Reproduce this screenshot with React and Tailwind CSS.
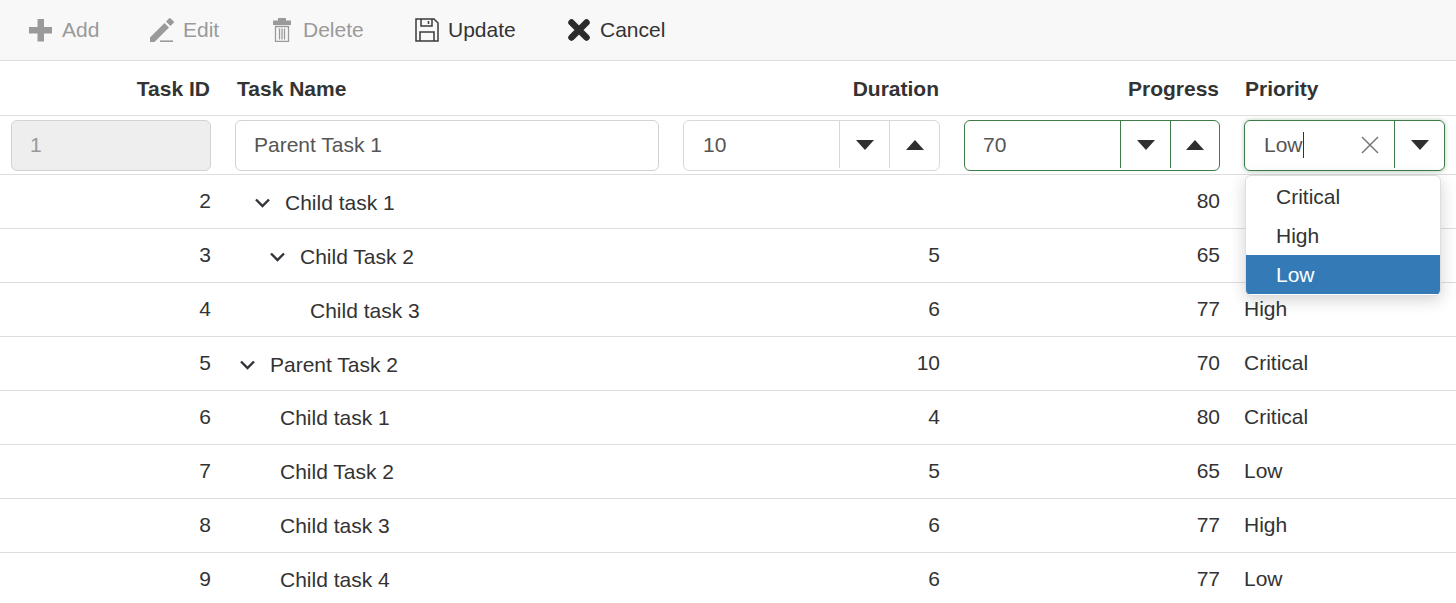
const cols = "grid grid-cols-[224px_447px_281px_280px_224px]";

const rows = [
  { id: 2, name: "Child task 1", pad: "pl-[31px] pt-[2px]", chev: true, dur: "", prog: "80", pri: "" },
  { id: 3, name: "Child Task 2", pad: "pl-[46px] pt-[2px]", chev: true, dur: "5", prog: "65", pri: "" },
  { id: 4, name: "Child task 3", pad: "pl-[86px] pt-[2px]", chev: false, dur: "6", prog: "77", pri: "High" },
  { id: 5, name: "Parent Task 2", pad: "pl-[16px] pt-[2px]", chev: true, dur: "10", prog: "70", pri: "Critical" },
  { id: 6, name: "Child task 1", pad: "pl-[56px]", chev: false, dur: "4", prog: "80", pri: "Critical" },
  { id: 7, name: "Child Task 2", pad: "pl-[56px]", chev: false, dur: "5", prog: "65", pri: "Low" },
  { id: 8, name: "Child task 3", pad: "pl-[56px]", chev: false, dur: "6", prog: "77", pri: "High" },
  { id: 9, name: "Child task 4", pad: "pl-[56px]", chev: false, dur: "6", prog: "77", pri: "Low" },
];

function Down() {
  return (
    <svg width="18" height="10" viewBox="0 0 18 10"><path d="M0 0h18L9 10z" fill="#2f2f2f" /></svg>
  );
}
function Up() {
  return (
    <svg width="18" height="10" viewBox="0 0 18 10"><path d="M0 10h18L9 0z" fill="#2f2f2f" /></svg>
  );
}
function Chevron() {
  return (
    <svg width="30" height="12" viewBox="0 0 30 12" className="shrink-0">
      <path d="M1 2.500l6.500 6.500 6.500-6.500" fill="none" stroke="#33333a" strokeWidth="2.400" />
    </svg>
  );
}

function Tool({ icon, label, disabled, width }) {
  return (
    <div className={`flex items-center ${width} ${disabled ? "text-[#9a9a9a]" : "text-[#333333]"}`}>
      {icon}
      <span>{label}</span>
    </div>
  );
}

function Spinner({ border, last }) {
  return (
    <>
      <div className={`w-[50px] h-[47px] flex items-center justify-center border-l ${border}`}><Down /></div>
      <div className={`${last} h-[47px] flex items-center justify-center border-l ${border}`}><Up /></div>
    </>
  );
}

export default function App() {
  return (
    <div className="relative w-[1456px] h-[603px] overflow-hidden bg-white text-[21px] leading-[28px] text-[#333333] font-['Liberation_Sans',Arial,sans-serif]">
      <div className="h-[61px] bg-[#f8f8f8] border-b border-[#dedede] flex items-center pl-[28px] pb-[1px]">
        <Tool
          disabled
          label="Add"
          width="w-[122px]"
          icon={
            <svg width="24" height="24" viewBox="0 0 24 24" className="mr-[10px]"><path d="M9.500 1h6.500v8h8v6.500h-8v8H9.500v-8H1V9h8.500z" fill="#9a9a9a" /></svg>
          }
        />
        <Tool
          disabled
          label="Edit"
          width="w-[123px]"
          icon={
            <svg width="25" height="24" viewBox="0 0 25 24" className="mr-[8px]">
              <path d="M0 19.500L14.500 5l4.500 4.500L4.500 24H0zM16 3.500L19 .5a1.200 1.200 0 0 1 1.700 0l2.800 2.800a1.200 1.200 0 0 1 0 1.700l-3 3z" fill="#9a9a9a" />
              <path d="M10 23.200h13" stroke="#9a9a9a" strokeWidth="1.600" />
            </svg>
          }
        />
        <Tool
          disabled
          label="Delete"
          width="w-[142px]"
          icon={
            <svg width="18" height="24" viewBox="0 0 18 24" className="mr-[12px]">
              <path d="M5 0h8v2.500h5V7H0V2.500h5z" fill="#9a9a9a" />
              <path d="M2.500 8.500h13V23.300h-13zM6.500 10.500v11M9 10.500v11M11.500 10.500v11" fill="none" stroke="#9a9a9a" strokeWidth="1.300" />
            </svg>
          }
        />
        <Tool
          label="Update"
          width="w-[152px]"
          icon={
            <svg width="24" height="24" viewBox="0 0 24 24" className="mr-[9px]">
              <path d="M1 1h18l4 4v18H1zM6 1v7h11V1M5 23v-9h14v9M13.500 3v3" fill="none" stroke="#3a3a3a" strokeWidth="1.500" />
            </svg>
          }
        />
        <Tool
          label="Cancel"
          width="w-[110px]"
          icon={
            <svg width="24" height="24" viewBox="0 0 24 24" className="mr-[9px]">
              <path d="M4.500 4.500l15 15M19.500 4.500l-15 15" fill="none" stroke="#2b2b2b" strokeWidth="6.500" strokeLinecap="round" />
            </svg>
          }
        />
      </div>

      <div className={`${cols} h-[55px] border-b border-[#dedede] font-bold items-center pt-[2px]`}>
        <div className="text-right pr-[14px]">Task ID</div>
        <div className="pl-[13px]">Task Name</div>
        <div className="text-right pr-[13px]">Duration</div>
        <div className="text-right pr-[13px]">Progress</div>
        <div className="pl-[13px]">Priority</div>
      </div>

      <div className={`${cols} h-[59px] border-b border-[#dedede] pt-[4px]`}>
        <div className="pl-[11px]">
          <div className="w-[200px] h-[51px] rounded-[6px] border border-[#d3d3d3] bg-[#eeeeee] text-[#999999] flex items-center pl-[18px] pb-[2px]">1</div>
        </div>
        <div className="pl-[11px]">
          <div className="w-[424px] h-[51px] rounded-[6px] border border-[#d3d3d3] text-[#555555] flex items-center pl-[18px] pb-[2px]">Parent Task 1</div>
        </div>
        <div className="pl-[12px]">
          <div className="w-[257px] h-[51px] rounded-[6px] border border-[#d8d8d8] text-[#555555] flex items-center pl-[19px] pb-[2px]">
            <span className="flex-1">10</span>
            <Spinner border="border-[#d8d8d8]" last="w-[50px]" />
          </div>
        </div>
        <div className="pl-[12px]">
          <div className="w-[256px] h-[51px] rounded-[6px] border border-[#3f7a4b] text-[#555555] flex items-center pl-[18px] pb-[2px]">
            <span className="flex-1">70</span>
            <Spinner border="border-[#3f7a4b]" last="w-[49px]" />
          </div>
        </div>
        <div className="pl-[12px]">
          <div className="w-[201px] h-[51px] rounded-[6px] border border-[#3f7a4b] shadow-[0_0_4px_rgba(60,122,69,0.4)] text-[#555555] flex items-center pl-[19px] pb-[2px]">
            <span className="border-r border-[#333333] leading-[26px]">Low</span>
            <div className="flex-1 flex justify-end pr-[15px]">
              <svg width="18" height="18" viewBox="0 0 18 18"><path d="M1 1l16 16M17 1L1 17" stroke="#777777" strokeWidth="1.500" fill="none" /></svg>
            </div>
            <div className="w-[50px] h-[47px] flex items-center justify-center border-l border-[#3f7a4b]"><Down /></div>
          </div>
        </div>
      </div>

      {rows.map((r) => (
        <div key={r.id} className={`${cols} h-[54px] border-b border-[#dedede] items-center`}>
          <div className="text-right pr-[13px] pb-[1px]">{r.id}</div>
          <div className={`flex items-center ${r.pad}`}>
            {r.chev && <Chevron />}
            <span>{r.name}</span>
          </div>
          <div className="text-right pr-[12px] pb-[1px]">{r.dur}</div>
          <div className="text-right pr-[12px] pb-[1px]">{r.prog}</div>
          <div className="pl-[12px] pb-[1px]">{r.pri}</div>
        </div>
      ))}

      <div className="absolute left-[1245px] top-[175px] w-[196px] rounded-[6px] border border-[#dedede] bg-white py-[1px] shadow-[0_4px_16px_rgba(0,0,0,0.18)] overflow-hidden">
        <div className="h-[39px] flex items-center pl-[30px]">Critical</div>
        <div className="h-[39px] flex items-center pl-[30px]">High</div>
        <div className="h-[39px] flex items-center pl-[30px] bg-[#337ab7] text-white">Low</div>
      </div>
    </div>
  );
}
